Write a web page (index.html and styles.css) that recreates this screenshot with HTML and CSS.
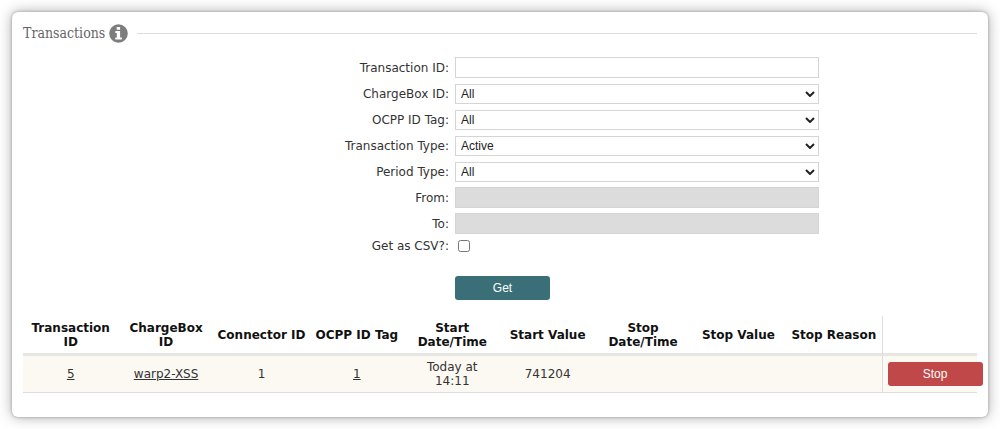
FILE: index.html
```
<!DOCTYPE html>
<html lang="en">
<head>
<meta charset="utf-8">
<title>Transactions</title>
<link rel="stylesheet" href="styles.css">
</head>
<body>
<main class="card">
  <header class="section-head">
    <h1 class="section-title">Transactions</h1>
    <svg class="info-icon" viewBox="0 0 19 19" role="img" aria-label="Information">
      <circle cx="9.5" cy="9.5" r="9.3" fill="#7d7d7d"/>
      <path fill="#fff" d="M7.7 3h3.4v2.7H7.7zM6.3 7h4.8v6.6h1.7v2H6.3v-2h1.5V9H6.3z"/>
    </svg>
    <span class="rule"></span>
  </header>
  <form class="filter">
    <label for="tid">Transaction ID:</label>
    <input class="field" id="tid" type="text">
    <label for="box">ChargeBox ID:</label>
    <div class="picker"><select class="field" id="box"><option>All</option></select><svg class="chevron" viewBox="0 0 10 6"><path d="M1 1l4 4 4-4"/></svg></div>
    <label for="tag">OCPP ID Tag:</label>
    <div class="picker"><select class="field" id="tag"><option>All</option></select><svg class="chevron" viewBox="0 0 10 6"><path d="M1 1l4 4 4-4"/></svg></div>
    <label for="type">Transaction Type:</label>
    <div class="picker"><select class="field" id="type"><option>Active</option></select><svg class="chevron" viewBox="0 0 10 6"><path d="M1 1l4 4 4-4"/></svg></div>
    <label for="period">Period Type:</label>
    <div class="picker"><select class="field" id="period"><option>All</option></select><svg class="chevron" viewBox="0 0 10 6"><path d="M1 1l4 4 4-4"/></svg></div>
    <label for="from">From:</label>
    <input class="field" id="from" type="text" disabled>
    <label for="to">To:</label>
    <input class="field" id="to" type="text" disabled>
    <label for="csv">Get as CSV?:</label>
    <input class="tick" id="csv" type="checkbox">
    <button class="button get" type="button">Get</button>
  </form>
  <table class="results">
    <thead>
      <tr>
        <th>Transaction ID</th><th>ChargeBox ID</th><th>Connector ID</th><th>OCPP ID Tag</th><th>Start Date/Time</th><th>Start Value</th><th>Stop Date/Time</th><th>Stop Value</th><th>Stop Reason</th><td class="action"></td>
      </tr>
    </thead>
    <tbody>
      <tr>
        <td><a href="#">5</a></td><td><a href="#">warp2-XSS</a></td><td>1</td><td><a href="#">1</a></td><td>Today at<br>14:11</td><td>741204</td><td></td><td></td><td></td><td class="action"><button class="button stop" type="button">Stop</button></td>
      </tr>
    </tbody>
  </table>
</main>
</body>
</html>
```
FILE: styles.css
```
* { box-sizing: border-box; }

body {
  margin: 0;
  padding: 12px;
  background: #fff;
  color: #333;
  font: 12px/14px "DejaVu Sans", Verdana, sans-serif;
}

.card {
  padding: 11px 11px 24px;
  background: #fff;
  border-radius: 6px;
  box-shadow: 0 0 3px #999, 0 0 14px #aaa;
}

.section-head {
  display: flex;
  align-items: center;
  height: 20px;
}

.section-title {
  margin: 0 4px 0 0;
  color: #666;
  font: 14px/20px "DejaVu Serif Condensed", "Noto Serif", serif;
}

.info-icon { width: 19px; height: 19px; }

.rule {
  flex: 1;
  height: 1px;
  margin-left: 9px;
  background: #ddd;
}

.filter {
  display: grid;
  grid-template-columns: 426fr 364fr 152fr;
  gap: 5px 6px;
  align-items: center;
  padding-top: 14px;
}

.filter label {
  grid-column: 1;
  text-align: right;
}

.field {
  width: 100%;
  height: 21px;
  padding: 0 5px;
  border: 1px solid #d5d5d5;
  border-radius: 0;
  background: #fff;
  color: #222;
  font: 12px "Liberation Sans", Arial, sans-serif;
  appearance: none;
}

.picker .field { height: 20px; }

.field:disabled { background: #dcdcdc; }

.picker {
  display: grid;
  align-items: center;
  min-height: 21px;
}
.picker > * { grid-area: 1 / 1; }

.chevron {
  justify-self: end;
  width: 10px;
  height: 6px;
  margin-right: 4px;
  fill: none;
  stroke: #222;
  stroke-width: 2;
  pointer-events: none;
}

.tick {
  width: 12px;
  height: 12px;
  margin: 0 3px;
}

.button {
  width: 95px;
  height: 24px;
  padding: 0;
  border: 0;
  border-radius: 3px;
  color: #fff;
  font: 12px "Liberation Sans", Arial, sans-serif;
}

.get {
  grid-column: 2;
  margin-top: 18px;
  background: #3a6f78;
}

.stop { background: #c04848; }

.results {
  width: 100%;
  margin-top: 16px;
  border-collapse: separate;
  border-spacing: 0;
  table-layout: fixed;
  text-align: center;
}

.results th,
.results td { padding: 4px 3px; }

.results thead th,
.results thead td {
  padding-top: 5px;
  color: #111;
  border-bottom: 3px solid #e6e6e3;
}

.results tbody td {
  background: #fcf9f2;
  border-bottom: 1px solid #ddd;
}

.results tbody .action,
.results thead .action {
  padding: 0 0 0 5px;
  border-left: 1px solid #ddd;
  text-align: left;
}

.results a { color: #333; }
```
